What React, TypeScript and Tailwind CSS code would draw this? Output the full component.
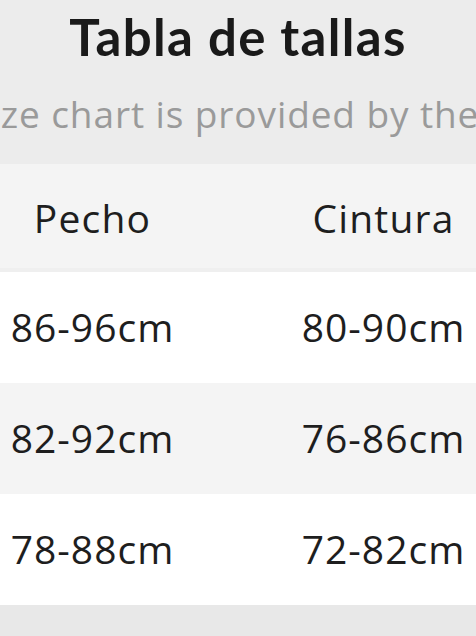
import React from "react";

const rows = [
    { pecho: "86-96cm", cintura: "80-90cm" },
    { pecho: "82-92cm", cintura: "76-86cm" },
    { pecho: "78-88cm", cintura: "72-82cm" },
];

export default function App() {
    return (
        <div className="w-[476px] h-[636px] overflow-hidden bg-[#e8e8e8] font-['Open_Sans',sans-serif]">
            <div className="h-[164px] bg-[#ececec] flex flex-col items-center pt-[9px]">
                <h1 className="font-['Lato',sans-serif] text-[51px] leading-[56px] font-bold tracking-[1.3px] text-[#1a1a1a]">
                    Tabla de tallas
                </h1>
                <p className="mt-[29px] whitespace-nowrap text-[37px] leading-[40px] tracking-[0.9px] text-[#9a9a9a]">
                    This size chart is provided by the seller
                </p>
            </div>

            {/* table is wider than the screen, only two columns show */}
            <div className="w-[582px] -ml-[53px]">
                <div className="grid grid-cols-2 h-[108px] items-center bg-[#f4f4f4] border-b-4 border-[#efefef] text-[39px] tracking-[1.2px] text-[#1e1e1e]">
                    <div className="text-center pt-[4px]">Pecho</div>
                    <div className="text-center pt-[4px]">Cintura</div>
                </div>
                {rows.map((r, i) => (
                    <div
                        key={i}
                        className={`grid grid-cols-2 h-[111px] items-center text-[39px] tracking-[1px] text-[#1e1e1e] ${i % 2 === 1 ? "bg-[#f4f4f4]" : "bg-white"}`}
                    >
                        <div className="text-center">{r.pecho}</div>
                        <div className="text-center">{r.cintura}</div>
                    </div>
                ))}
            </div>
        </div>
    );
}
